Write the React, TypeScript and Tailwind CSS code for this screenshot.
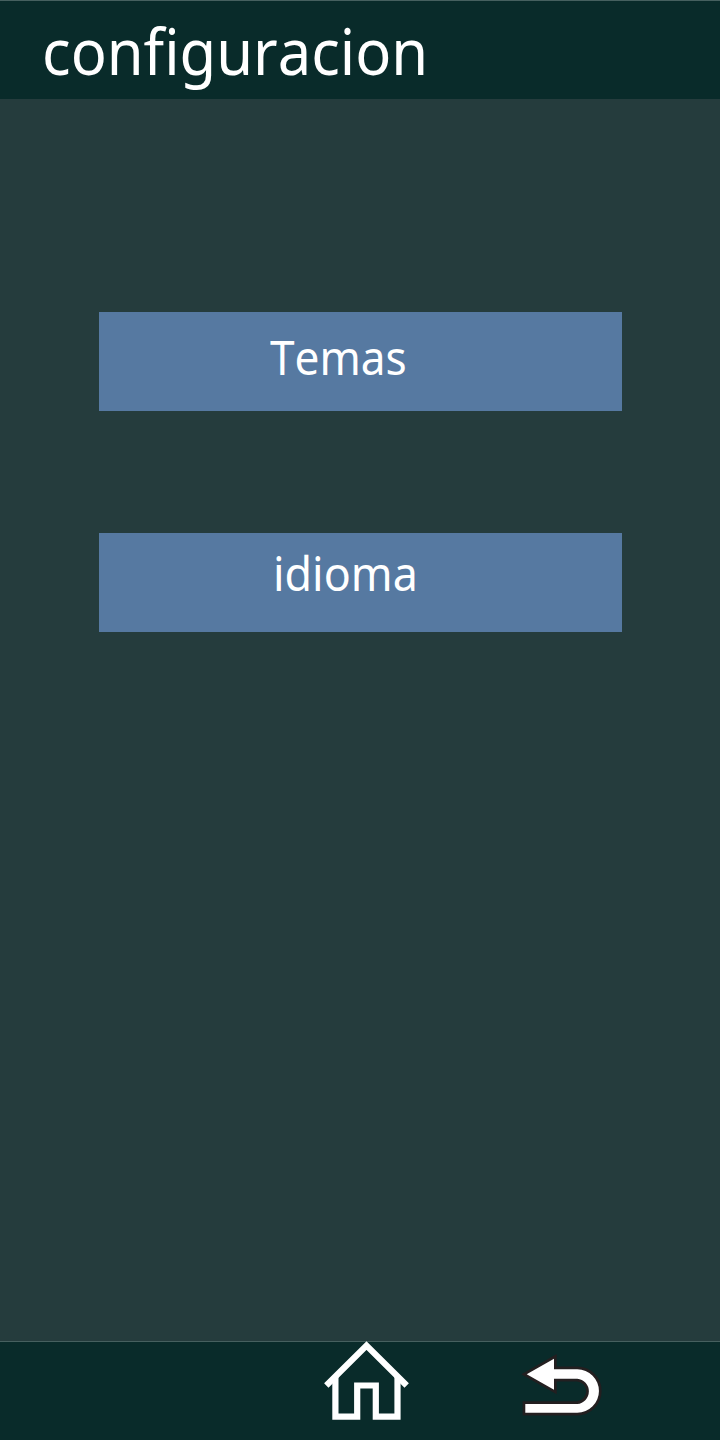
function HomeIcon() {
  return (
    <svg width="90" height="84" viewBox="322 1338 90 84" fill="none" stroke="#fff" strokeWidth="6.2">
      <path d="M326.3 1385.5 366.5 1345.5 406.7 1385.5" />
      <path d="M335.4 1376V1416.7H357.2V1385.5H375.8V1416.7H397.5V1376" />
    </svg>
  );
}

function BackIcon() {
  return (
    <svg width="84" height="68" viewBox="520 1352 84 68">
      <path
        d="M526.7 1374.3 554 1358.7V1369.3H577.3A21.7 21.7 0 0 1 577.3 1412.7H525.3V1404H577.3A12.7 12.7 0 0 0 577.3 1378.7H554V1389.7Z"
        fill="#fff"
        stroke="#231f20"
        strokeWidth="5.4"
        strokeMiterlimit="10"
        paintOrder="stroke"
      />
    </svg>
  );
}

export default function App() {
  return (
    <div className="flex h-[1440px] w-[720px] flex-col overflow-hidden bg-[#253c3d] font-['Noto_Sans',sans-serif] text-white [font-kerning:none]">
      <header className="h-[99px] shrink-0 border-t border-[#46605f] bg-[#092b2a] pl-[42px]">
        <h1 className="w-fit origin-left scale-x-[0.947] text-[63px] leading-[100px] [font-variant-ligatures:none]">
          configuracion
        </h1>
      </header>
      <main className="flex grow flex-col items-center gap-[122px] pt-[213px] pl-px">
        <button className="flex h-[99px] w-[523px] items-start bg-[#5679a1] pl-[171px] text-[47px] leading-[91px]">
          <span className="origin-left scale-x-[0.94]">Temas</span>
        </button>
        <button className="flex h-[99px] w-[523px] items-start bg-[#5679a1] pl-[174px] text-[47px] leading-[81px]">
          <span className="origin-left scale-x-[0.953]">idioma</span>
        </button>
      </main>
      <footer className="flex h-[99px] shrink-0 items-start border-t border-[#46605f] bg-[#092b2a] pl-[322px]">
        <a href="#inicio" aria-label="Inicio" className="-mt-1">
          <HomeIcon />
        </a>
        <a href="#volver" aria-label="Volver" className="mt-[10px] ml-[108px]">
          <BackIcon />
        </a>
      </footer>
    </div>
  );
}
